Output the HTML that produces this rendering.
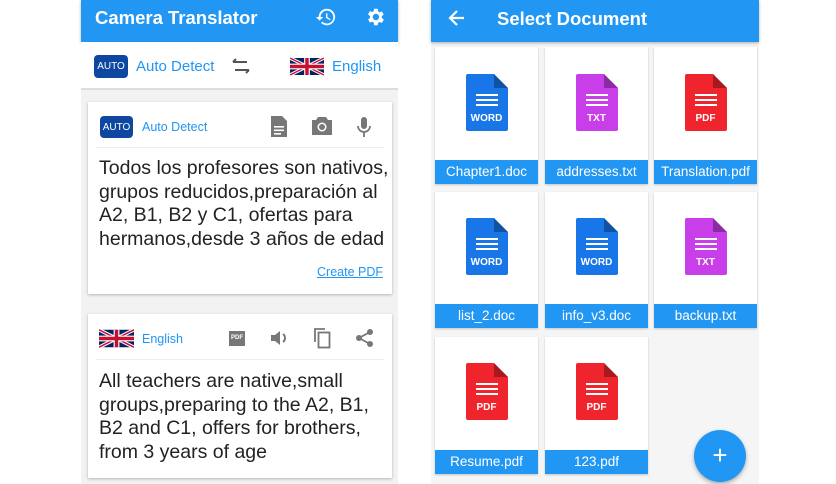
<!DOCTYPE html><html><head><meta charset="utf-8"><style>
*{margin:0;padding:0;box-sizing:border-box}
body{width:836px;height:484px;background:#fff;font-family:"Liberation Sans",sans-serif;position:relative;overflow:hidden}
.a{position:absolute}
.blue{background:#2196F3}
.card{background:#fff;box-shadow:0 1px 3px rgba(0,0,0,.25)}
.auto{background:#0d47a1;color:#fff;font-size:10px;border-radius:4px;text-align:center;display:flex;align-items:center;justify-content:center}
.t{color:#222;font-size:19.5px;line-height:23.5px}
.tile{background:#fff;box-shadow:0 1px 2px rgba(0,0,0,.2)}
.lbl{position:absolute;left:0;right:0;bottom:0;height:24px;background:#2196F3;color:#fff;font-size:13.5px;text-align:center;line-height:24px}
.ic{position:absolute;left:50%;margin-left:-21px}
</style></head><body>
<svg width="0" height="0" style="position:absolute"><defs>
<symbol id="doc" viewBox="0 0 42 57"><path d="M2 0H28L42 14V55a2 2 0 0 1-2 2H2a2 2 0 0 1-2-2V2a2 2 0 0 1 2-2z"/><path d="M28 0L42 14H28z" fill="rgba(0,0,0,.3)"/><g fill="#fff"><rect x="10" y="20" width="22" height="2"/><rect x="10" y="25" width="22" height="2"/><rect x="10" y="30" width="22" height="2"/></g></symbol>
<symbol id="uk" viewBox="0 0 60 30"><rect width="60" height="30" fill="#012169"/><path d="M0 0L60 30M60 0L0 30" stroke="#fff" stroke-width="6"/><path d="M0 0L60 30M60 0L0 30" stroke="#C8102E" stroke-width="2.5"/><path d="M30 0V30M0 15H60" stroke="#fff" stroke-width="10"/><path d="M30 0V30M0 15H60" stroke="#C8102E" stroke-width="6"/></symbol>
</defs></svg>

<div class="a" style="left:81px;top:0;width:317px;height:484px;background:#f2f2f2"></div>
<div class="a blue" style="left:81px;top:0;width:317px;height:42px;box-shadow:0 1px 3px rgba(0,0,0,.3)"></div>
<div class="a" style="left:95px;top:7px;color:#fff;font-size:18.5px;font-weight:bold">Camera Translator</div>
<svg class="a" style="left:315px;top:6px" width="22" height="22" viewBox="0 0 24 24"><path fill="#fff" d="M13 3a9 9 0 0 0-9 9H1l4 4 4-4H6a7 7 0 1 1 2 5l-1.4 1.4A9 9 0 1 0 13 3zm-1 5v5l4.3 2.5.7-1.2-3.5-2.1V8z"/></svg>
<svg class="a" style="left:364px;top:6px" width="22" height="22" viewBox="0 0 24 24"><path fill="#fff" d="M19.4 13a7.5 7.5 0 0 0 0-2l2.1-1.6-2-3.5-2.5 1a7 7 0 0 0-1.7-1L15 3h-4l-.4 2.6a7 7 0 0 0-1.7 1l-2.5-1-2 3.5L6.6 11a7.5 7.5 0 0 0 0 2l-2.1 1.6 2 3.5 2.5-1a7 7 0 0 0 1.7 1L11 21h4l.4-2.6a7 7 0 0 0 1.7-1l2.5 1 2-3.5zM13 15.5a3.5 3.5 0 1 1 0-7 3.5 3.5 0 0 1 0 7z"/></svg>
<div class="a" style="left:81px;top:42px;width:317px;height:48px;background:#fff;border-bottom:2px solid #ddd"></div>
<div class="a auto" style="left:94px;top:55px;width:34px;height:23px">AUTO</div>
<div class="a" style="left:136px;top:58px;color:#2196F3;font-size:15px">Auto Detect</div>
<svg class="a" style="left:231px;top:58px" width="20" height="16" viewBox="0 0 20 16"><path d="M2 4h14M2 4l3-3M18 12H4M18 12l-3 3" stroke="#555" stroke-width="2" fill="none"/></svg>
<svg class="a" style="left:290px;top:55px;border-radius:4px" width="34" height="23"><use href="#uk"/></svg>
<div class="a" style="left:332px;top:58px;color:#2196F3;font-size:15px">English</div>

<div class="a card" style="left:88px;top:102px;width:304px;height:192px"></div>
<div class="a auto" style="left:100px;top:116px;width:33px;height:22px">AUTO</div>
<div class="a" style="left:142px;top:120px;color:#2196F3;font-size:12.5px">Auto Detect</div>
<svg class="a" style="left:269px;top:116px" width="20" height="22" viewBox="0 0 20 22"><path fill="#777" d="M2 0h11l5 5v16H2z"/><g fill="#fff"><rect x="5" y="10" width="10" height="1.6"/><rect x="5" y="13.5" width="10" height="1.6"/><rect x="5" y="17" width="7" height="1.6"/></g></svg>
<svg class="a" style="left:311px;top:116px" width="22" height="20" viewBox="0 0 22 20"><path fill="#777" d="M7 1h8l2 3h4v15H1V4h4z"/><circle cx="11" cy="11" r="4.5" fill="#fff"/><circle cx="11" cy="11" r="3" fill="#777"/></svg>
<svg class="a" style="left:356px;top:116px" width="16" height="22" viewBox="0 0 16 22"><rect x="5" y="1" width="6" height="12" rx="3" fill="#777"/><path d="M2 10a6 6 0 0 0 12 0M8 16v5" stroke="#777" stroke-width="1.8" fill="none"/></svg>
<div class="a" style="left:96px;top:147px;width:288px;height:1px;background:#eee"></div>
<div class="a t" style="left:99px;top:157px">Todos los profesores son nativos,<br>grupos reducidos,preparación al<br>A2, B1, B2 y C1, ofertas para<br>hermanos,desde 3 años de edad</div>
<div class="a" style="left:317px;top:265px;color:#2196F3;font-size:12.5px;text-decoration:underline">Create PDF</div>

<div class="a card" style="left:88px;top:314px;width:304px;height:164px"></div>
<svg class="a" style="left:99px;top:327px;border-radius:3px" width="35" height="23"><use href="#uk"/></svg>
<div class="a" style="left:142px;top:332px;color:#2196F3;font-size:12.5px">English</div>
<div class="a" style="left:229px;top:331px;width:16px;height:15px;background:#777;color:#fff;font-size:6px;font-weight:bold;line-height:15px;text-align:center">PDF</div>
<svg class="a" style="left:269px;top:328px" width="20" height="20" viewBox="0 0 20 20"><path fill="#777" d="M2 7h4l5-4v14l-5-4H2z"/><path d="M14 6a5 5 0 0 1 0 8" stroke="#777" stroke-width="2" fill="none"/></svg>
<svg class="a" style="left:312px;top:327px" width="20" height="22" viewBox="0 0 20 22"><path d="M3 15V2h10" stroke="#777" stroke-width="1.8" fill="none"/><rect x="6.5" y="5.5" width="11" height="15" stroke="#777" stroke-width="1.8" fill="none"/></svg>
<svg class="a" style="left:355px;top:328px" width="20" height="20" viewBox="0 0 20 20"><circle cx="15" cy="4" r="3" fill="#777"/><circle cx="4" cy="10" r="3" fill="#777"/><circle cx="15" cy="16" r="3" fill="#777"/><path d="M15 4L4 10l11 6" stroke="#777" stroke-width="1.8" fill="none"/></svg>
<div class="a" style="left:96px;top:359px;width:288px;height:1px;background:#eee"></div>
<div class="a t" style="left:99px;top:370px">All teachers are native,small<br>groups,preparing to the A2, B1,<br>B2 and C1, offers for brothers,<br>from 3 years of age</div>

<div class="a" style="left:431px;top:0;width:328px;height:484px;background:#f5f5f5"></div>
<div class="a blue" style="left:431px;top:0;width:328px;height:42px;box-shadow:0 1px 3px rgba(0,0,0,.3)"></div>
<svg class="a" style="left:448px;top:9px" width="18" height="18" viewBox="0 0 18 18"><path d="M16 9H3M9 2L2 9l7 7" stroke="#fff" stroke-width="2.2" fill="none"/></svg>
<div class="a" style="left:497px;top:8px;color:#fff;font-size:18.5px;font-weight:bold">Select Document</div>

<div class="a tile" style="left:435px;top:47px;width:103px;height:137px"><svg class="ic" style="top:27px" width="42" height="57" fill="#1976e8"><use href="#doc"/></svg><div class="a" style="left:0;right:0;top:66px;text-align:center;color:#fff;font-size:10px;font-weight:bold">WORD</div><div class="lbl">Chapter1.doc</div></div>
<div class="a tile" style="left:545px;top:47px;width:103px;height:137px"><svg class="ic" style="top:27px" width="42" height="57" fill="#c83ee8"><use href="#doc"/></svg><div class="a" style="left:0;right:0;top:66px;text-align:center;color:#fff;font-size:10px;font-weight:bold">TXT</div><div class="lbl">addresses.txt</div></div>
<div class="a tile" style="left:654px;top:47px;width:103px;height:137px"><svg class="ic" style="top:27px" width="42" height="57" fill="#f0242c"><use href="#doc"/></svg><div class="a" style="left:0;right:0;top:66px;text-align:center;color:#fff;font-size:10px;font-weight:bold">PDF</div><div class="lbl">Translation.pdf</div></div>

<div class="a tile" style="left:435px;top:192px;width:103px;height:136px"><svg class="ic" style="top:26px" width="42" height="57" fill="#1976e8"><use href="#doc"/></svg><div class="a" style="left:0;right:0;top:65px;text-align:center;color:#fff;font-size:10px;font-weight:bold">WORD</div><div class="lbl">list_2.doc</div></div>
<div class="a tile" style="left:545px;top:192px;width:103px;height:136px"><svg class="ic" style="top:26px" width="42" height="57" fill="#1976e8"><use href="#doc"/></svg><div class="a" style="left:0;right:0;top:65px;text-align:center;color:#fff;font-size:10px;font-weight:bold">WORD</div><div class="lbl">info_v3.doc</div></div>
<div class="a tile" style="left:654px;top:192px;width:103px;height:136px"><svg class="ic" style="top:26px" width="42" height="57" fill="#c83ee8"><use href="#doc"/></svg><div class="a" style="left:0;right:0;top:65px;text-align:center;color:#fff;font-size:10px;font-weight:bold">TXT</div><div class="lbl">backup.txt</div></div>

<div class="a tile" style="left:435px;top:337px;width:103px;height:137px"><svg class="ic" style="top:26px" width="42" height="57" fill="#f0242c"><use href="#doc"/></svg><div class="a" style="left:0;right:0;top:65px;text-align:center;color:#fff;font-size:10px;font-weight:bold">PDF</div><div class="lbl">Resume.pdf</div></div>
<div class="a tile" style="left:545px;top:337px;width:103px;height:137px"><svg class="ic" style="top:26px" width="42" height="57" fill="#f0242c"><use href="#doc"/></svg><div class="a" style="left:0;right:0;top:65px;text-align:center;color:#fff;font-size:10px;font-weight:bold">PDF</div><div class="lbl">123.pdf</div></div>

<div class="a" style="left:694px;top:430px;width:52px;height:52px;border-radius:50%;background:#2196F3;box-shadow:0 2px 4px rgba(0,0,0,.3);color:#fff;font-size:26px;text-align:center;line-height:50px">+</div>
</body></html>
